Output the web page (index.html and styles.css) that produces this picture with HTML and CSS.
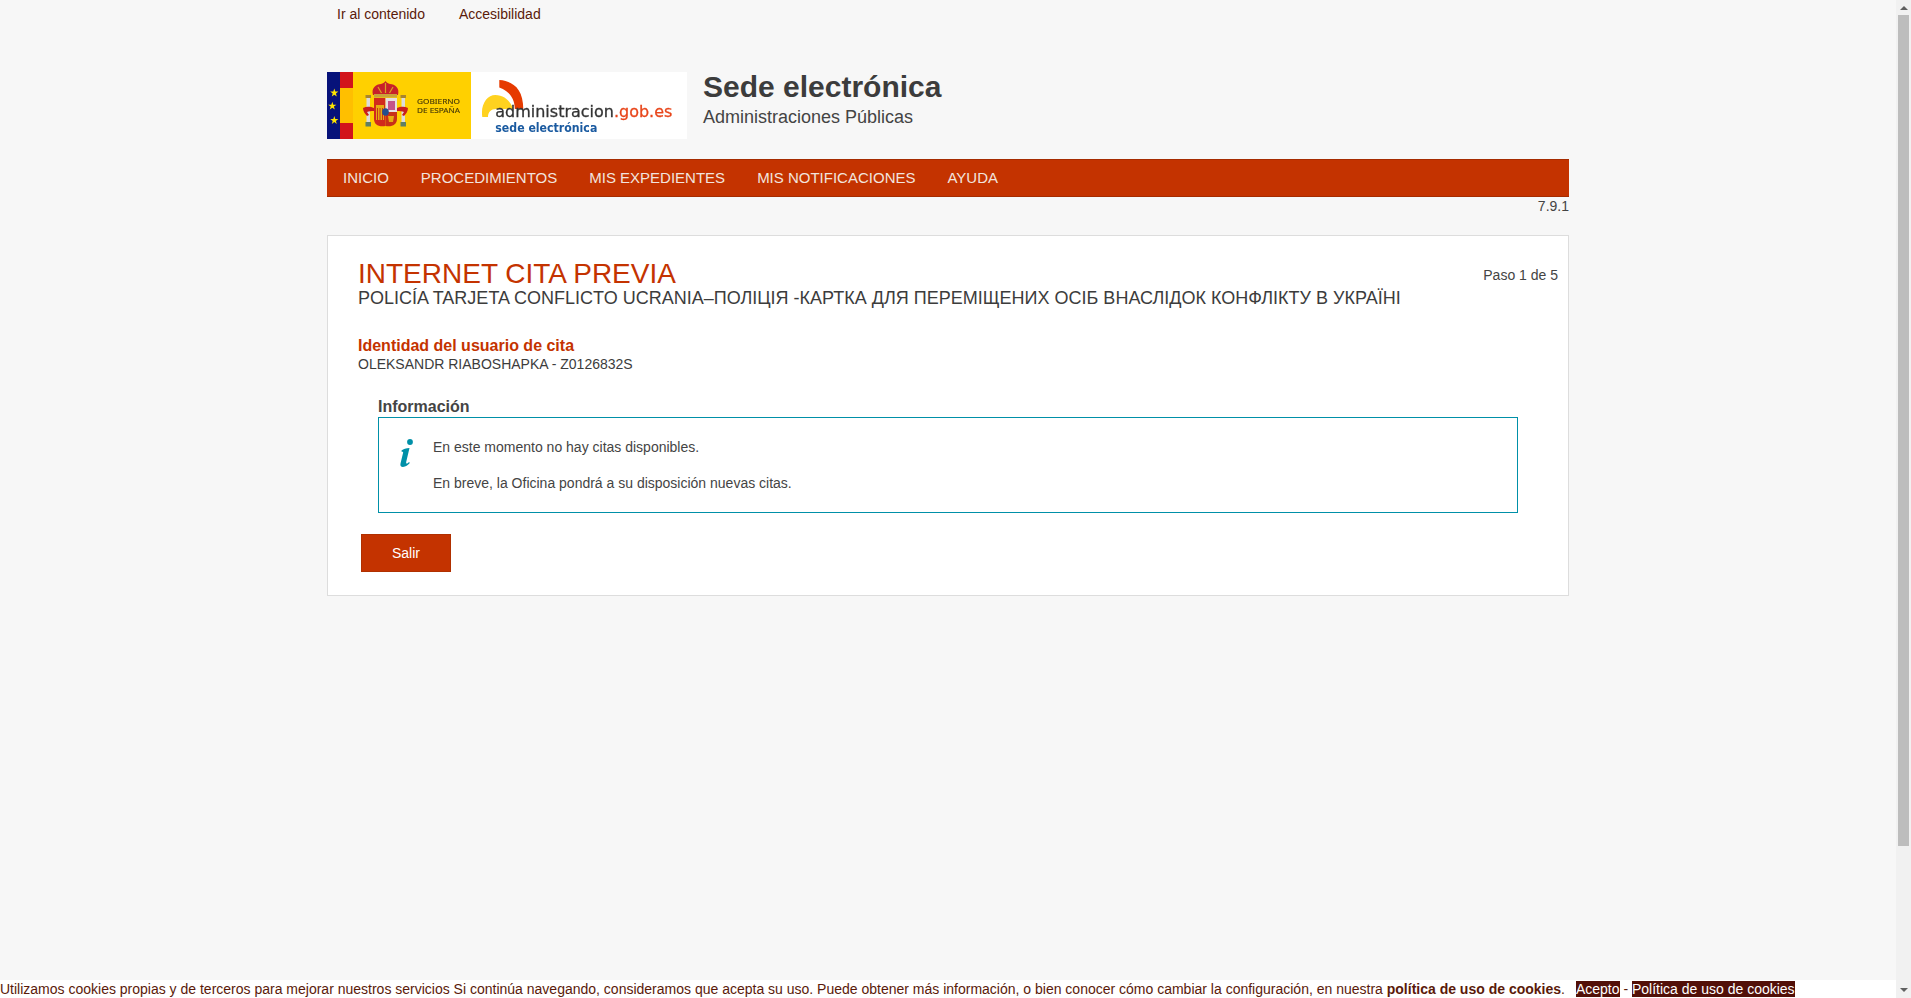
FILE: index.html
```html
<!DOCTYPE html>
<html lang="es">
<head>
<meta charset="utf-8">
<title>Sede electrónica - Internet Cita Previa</title>
<link rel="stylesheet" href="styles.css">
</head>
<body>
<div class="viewport">
  <div class="page">
    <div class="container">
      <div class="skip"><a>Ir al contenido</a><a>Accesibilidad</a></div>
      <header class="brand">
        <svg class="logo" viewBox="0 0 144 67" width="144" height="67" role="img" aria-label="Gobierno de España">
          <rect width="144" height="67" fill="#ffd000"/>
          <rect width="13" height="67" fill="#07127a"/>
          <rect x="13" width="13" height="67" fill="#ffbf00"/>
          <rect x="13" width="13" height="16" fill="#d2131b"/>
          <rect x="13" y="51" width="13" height="16" fill="#d2131b"/>
          <g fill="#ffe600">
            <path d="M7.300 16.600l1 3 3.100 0-2.500 1.900.9 3-2.500-1.800-2.500 1.800.9-3-2.500-1.900 3.100 0z"/>
            <path d="M5.300 29.700l1 3 3.100 0-2.500 1.900.9 3-2.500-1.800-2.500 1.800.9-3-2.500-1.900 3.100 0z"/>
            <path d="M7.300 44l1 3 3.100 0-2.500 1.900.9 3-2.500-1.800-2.500 1.800.9-3-2.500-1.900 3.100 0z"/>
          </g>
          <path d="M46 23c-2-7 3-11 8-11 2-1 3-1 4.500-3 1.500 2 2.500 2 4.500 3 5 0 10 4 8 11z" fill="#c8202a"/>
          <path d="M47 22h23v3.500H47z" fill="#c9a23a"/>
          <path d="M51 15l3.500 6M58.500 11v10M66 15l-3.500 6" stroke="#d9a520" stroke-width="1.200" fill="none"/>
          <rect x="38.500" y="23" width="5.500" height="3" fill="#a9852c"/>
          <rect x="39.500" y="26" width="3.500" height="25" fill="#dcdcdc"/>
          <rect x="38.500" y="50" width="5.500" height="4.500" fill="#5f7f63"/>
          <rect x="73.500" y="23" width="5.500" height="3" fill="#a9852c"/>
          <rect x="74.500" y="26" width="3.500" height="25" fill="#dcdcdc"/>
          <rect x="73.500" y="50" width="5.500" height="4.500" fill="#5f7f63"/>
          <path d="M36 36c4-2 8-1 11 0v3c-3 0-5 0-7 1l2 3-2 1c-2-2-4-5-4-8zM81 36c-4-2-8-1-11 0v3c3 0 5 0 7 1l-2 3 2 1c2-2 4-5 4-8z" fill="#c81e1e"/>
          <path d="M47 26h11.500v28c-7 1.500-11.500-2-11.500-7z" fill="#d12a1c"/>
          <path d="M49 33h8v15h-8z" fill="#e5ac12"/>
          <path d="M50.500 36v12M53 36v12M55.500 36v12" stroke="#c8321c" stroke-width="1"/>
          <path d="M58.500 26H70v14H58.500z" fill="#e6dfe2"/>
          <path d="M61 29h7v9h-7z" fill="#c4538a"/>
          <path d="M58.500 40H70v7c0 5-5 8.500-11.500 7z" fill="#c83018"/>
          <path d="M61 44l6 0-1 6h-4z" fill="#e5ac12"/>
          <ellipse cx="58.500" cy="40" rx="3.300" ry="3.800" fill="#234f8e"/>
          <text class="gob-text" x="90" y="31.500" textLength="43" lengthAdjust="spacingAndGlyphs">GOBIERNO</text>
          <text class="gob-text" x="90" y="41" textLength="43" lengthAdjust="spacingAndGlyphs">DE ESPAÑA</text>
        </svg>
        <svg class="logo" viewBox="0 0 216 67" width="216" height="67" role="img" aria-label="administracion.gob.es sede electrónica">
          <rect width="216" height="67" fill="#fff"/>
          <path d="M28.300 8c14 1 24 9 24 29h-8.500c0-11-6-18-15.500-21.500z" fill="#e63a00"/>
          <path d="M11.300 45c-2-13 5-22 13-22 9 0 15 6 18 14H25c-5 0-8 3-8 8z" fill="#ffd21f"/>
          <text class="adm-text" x="24.300" y="44.500" textLength="177" lengthAdjust="spacingAndGlyphs">administracion<tspan class="adm-dom">.gob.es</tspan></text>
          <text class="adm-sede" x="24.300" y="59.500" textLength="102" lengthAdjust="spacingAndGlyphs">sede electrónica</text>
        </svg>
        <div class="brand-text">
          <div class="brand-title">Sede electrónica</div>
          <div class="brand-sub">Administraciones Públicas</div>
        </div>
      </header>
      <nav class="nav">
        <a>INICIO</a><a>PROCEDIMIENTOS</a><a>MIS EXPEDIENTES</a><a>MIS NOTIFICACIONES</a><a>AYUDA</a>
      </nav>
      <div class="version">7.9.1</div>
      <main class="card">
        <div class="step">Paso 1 de 5</div>
        <h1 class="title">INTERNET CITA PREVIA</h1>
        <h2 class="subtitle">POLICÍA TARJETA CONFLICTO UCRANIA–ПОЛІЦІЯ -КАРТКА ДЛЯ ПЕРЕМІЩЕНИХ ОСІБ ВНАСЛІДОК КОНФЛІКТУ В УКРАЇНІ</h2>
        <h3 class="identity-label">Identidad del usuario de cita</h3>
        <p class="identity">OLEKSANDR RIABOSHAPKA - Z0126832S</p>
        <section class="info">
          <h4 class="info-title">Información</h4>
          <div class="info-box">
            <svg class="info-icon" viewBox="0 0 14 30" width="14" height="30" aria-hidden="true">
              <circle cx="10" cy="4" r="2.900"/>
              <path d="M1.500 12.500c2-1.500 4.500-2.500 8-2.500l-3.300 14c-.3 1.500.5 2 1.400 1.300l1.500-1.200.7 1c-2 2.300-4 3.900-6.800 3.900-2.200 0-3-1.300-2.500-3.500l2.600-10.800c.2-1-.4-1.300-1.300-.8z"/>
            </svg>
            <div class="info-text">
              <p>En este momento no hay citas disponibles.</p>
              <p>En breve, la Oficina pondrá a su disposición nuevas citas.</p>
            </div>
          </div>
        </section>
        <button class="btn" type="button">Salir</button>
      </main>
    </div>
    <div class="cookies">Utilizamos cookies propias y de terceros para mejorar nuestros servicios Si continúa navegando, consideramos que acepta su uso. Puede obtener más información, o bien conocer cómo cambiar la configuración, en nuestra <b>política de uso de cookies</b>.<a class="cookie-link first">Acepto</a> - <a class="cookie-link">Política de uso de cookies</a></div>
  </div>
  <aside class="scrollbar" aria-hidden="true">
    <span class="arrow up"></span>
    <span class="thumb"></span>
    <span class="arrow down"></span>
  </aside>
</div>
</body>
</html>
```
FILE: styles.css
```css
* { box-sizing: border-box; }
html, body { margin: 0; height: 100%; overflow: hidden; }
body { background: #f7f7f7; color: #333; font-family: "Liberation Sans", Arial, sans-serif; font-size: 14px; }
.viewport { display: flex; height: 998px; }
.page { flex: 1; display: flex; flex-direction: column; min-width: 0; }
.container { width: 1242px; margin: 0 0 0 327px; flex: 1; }
.skip { display: flex; gap: 34px; padding: 6px 0 0 10px; height: 72px; font-size: 14px; line-height: 16px; color: #5a1a0a; }
.brand { display: flex; align-items: stretch; height: 67px; }
.logo { display: block; flex: none; filter: blur(0.3px); }
.gob-text { font-family: "Noto Sans", sans-serif; font-size: 7.500px; fill: #4a3c08; stroke: #4a3c08; stroke-width: 0.150px; }
.adm-text { font-family: "DejaVu Sans", sans-serif; font-size: 16.500px; fill: #333; stroke: #333; stroke-width: 0.300px; }
.adm-dom { fill: #e8451a; stroke: #e8451a; }
.adm-sede { font-family: "DejaVu Sans", sans-serif; font-weight: 700; font-size: 12px; fill: #1a5aa0; }
.brand-text { margin-left: 16px; }
.brand-title { font-size: 30px; font-weight: 700; line-height: 30px; color: #3c3c3c; }
.brand-sub { font-size: 18px; line-height: 22px; margin-top: 4px; color: #444; }
.nav { display: flex; gap: 32px; height: 38px; margin-top: 20px; padding: 0 16px; background: #c43300; border: 1px solid #a52b00; border-width: 1px 0; color: #f2e4de; font-size: 15px; line-height: 36px; }
.version { text-align: right; font-size: 14px; line-height: 18px; height: 38px; color: #444; }
.card { position: relative; background: #fff; border: 1px solid #ddd; height: 361px; padding: 24px 30px 0; }
.step { position: absolute; top: 31px; right: 10px; font-size: 14px; line-height: 16px; color: #444; }
.title { margin: 0; font-size: 28px; font-weight: 400; line-height: 28px; color: #c43300; }
.subtitle { margin: 0; font-size: 18px; font-weight: 400; line-height: 20px; color: #3c3c3c; white-space: nowrap; }
.identity-label { margin: 28px 0 0; font-size: 16px; line-height: 19px; font-weight: 700; color: #c43300; }
.identity { margin: 0; font-size: 14px; line-height: 18px; color: #3c3c3c; }
.info { margin: 24px 0 0 20px; width: 1140px; }
.info-title { margin: 0; font-size: 16px; line-height: 20px; font-weight: 700; color: #444; }
.info-box { display: flex; height: 96px; border: 1px solid #0090a8; padding: 21px 0 0 21px; }
.info-icon { flex: none; margin: -1px 19px 0 0; fill: #0090a8; }
.info-text { font-size: 14px; color: #444; }
.info-text p { margin: 0 0 20px; line-height: 16px; }
.btn { display: block; width: 90px; height: 38px; margin: 21px 0 0 3px; background: #c43300; border: 1px solid #b03000; color: #fff; font: 14px "Liberation Sans", Arial, sans-serif; }
.cookies { height: 18px; background: #fff; color: #5a1a0a; font-size: 14px; line-height: 16px; padding-top: 1px; white-space: nowrap; }
.cookies b { font-weight: 700; }
.cookie-link { background: #521008; color: #fff; }
.cookie-link.first { margin-left: 11px; }
.scrollbar { width: 15px; flex: none; padding: 0 2px; background: #f1f1f1; display: flex; flex-direction: column; }
.thumb { height: 831px; flex: none; background: #bdbdbd; }
.arrow { display: block; height: 15px; flex: none; position: relative; }
.arrow::after { content: ""; position: absolute; left: 1.500px; border: 4px solid transparent; }
.arrow.up::after { top: 2px; border-bottom-color: #606060; }
.arrow.down { margin-top: auto; }
.arrow.down::after { top: 5px; border-top-color: #606060; }
```
